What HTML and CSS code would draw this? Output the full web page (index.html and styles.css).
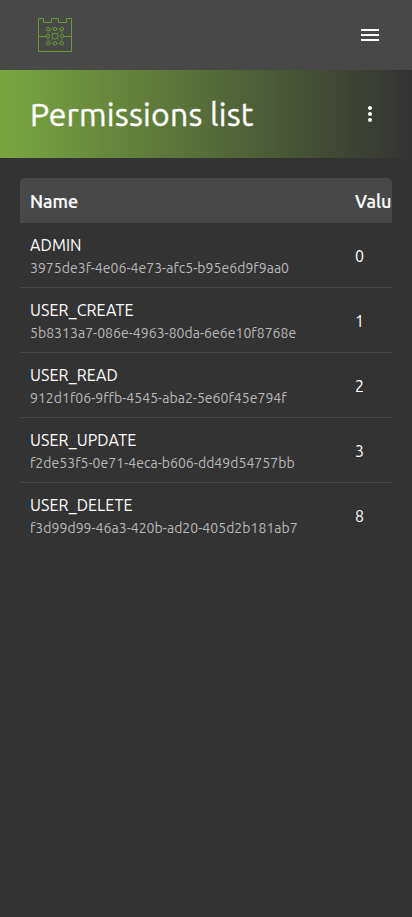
FILE: index.html
```html
<!DOCTYPE html>
<html lang="en">
<head>
<meta charset="utf-8">
<meta name="viewport" content="width=device-width, initial-scale=1">
<title>Permissions list</title>
<link rel="stylesheet" href="styles.css">
</head>
<body>
<header class="topbar">
  <svg class="logo" viewBox="0 0 34 34" fill="none" stroke="#679b31" stroke-width="1">
    <path d="M.5.5H5.5V4.5H13.5V.5H20.5V4.5H28.5V.5H33.5V33.5H.5ZM.5 18.500H8.500M25.500 18.500H33.500"/>
    <path d="M10 11V25.500M24 11V25.500M10 11H24M10 25.500H24M10 11L24 25.500M24 11L10 25.500" stroke-width=".8" opacity=".8"/>
    <g fill="#484848">
      <circle cx="10" cy="11" r="1.700"/><circle cx="17" cy="11" r="1.700"/><circle cx="24" cy="11" r="1.700"/>
      <circle cx="10" cy="18.200" r="1.700"/><circle cx="17" cy="18.200" r="3"/><circle cx="24" cy="18.200" r="1.700"/>
      <circle cx="10" cy="25.300" r="1.700"/><circle cx="17" cy="25.300" r="1.700"/><circle cx="24" cy="25.300" r="1.700"/>
    </g>
  </svg>
  <svg class="icon" viewBox="0 0 24 24" fill="#fff"><path d="M3 18h18v-2H3v2zm0-5h18v-2H3v2zm0-7v2h18V6H3z"/></svg>
</header>
<section class="titlebar">
  <h1 class="title">Permissions list</h1>
  <svg class="icon" viewBox="0 0 24 24" fill="#fff"><path d="M12 8c1.100 0 2-.9 2-2s-.9-2-2-2-2 .9-2 2 .9 2 2 2zm0 2c-1.100 0-2 .9-2 2s.9 2 2 2 2-.9 2-2-.9-2-2-2zm0 6c-1.100 0-2 .9-2 2s.9 2 2 2 2-.9 2-2-.9-2-2-2z"/></svg>
</section>
<main class="table">
  <div class="row head"><div class="name-head">Name</div><div class="value-head">Value</div></div>
  <div class="row"><div><div class="name">ADMIN</div><div class="id">3975de3f-4e06-4e73-afc5-b95e6d9f9aa0</div></div><div class="value">0</div></div>
  <div class="row"><div><div class="name">USER_CREATE</div><div class="id">5b8313a7-086e-4963-80da-6e6e10f8768e</div></div><div class="value">1</div></div>
  <div class="row"><div><div class="name">USER_READ</div><div class="id">912d1f06-9ffb-4545-aba2-5e60f45e794f</div></div><div class="value">2</div></div>
  <div class="row"><div><div class="name">USER_UPDATE</div><div class="id">f2de53f5-0e71-4eca-b606-dd49d54757bb</div></div><div class="value">3</div></div>
  <div class="row"><div><div class="name">USER_DELETE</div><div class="id">f3d99d99-46a3-420b-ad20-405d2b181ab7</div></div><div class="value">8</div></div>
</main>
</body>
</html>
```
FILE: styles.css
```css
* { box-sizing: border-box; }
body {
  margin: 0;
  min-height: 100vh;
  background: #333;
  color: #fff;
  font-family: Ubuntu, "Noto Sans", sans-serif;
  font-size: 16px;
}
.topbar {
  display: flex;
  align-items: center;
  justify-content: space-between;
  height: 70px;
  padding: 0 30px 0 38px;
  background: #484848;
}
.logo { width: 34px; height: 34px; }
.icon { width: 24px; height: 24px; }
.titlebar {
  display: flex;
  align-items: center;
  justify-content: space-between;
  height: 88px;
  padding: 0 30px;
  background: linear-gradient(to right, #7aa640, #333);
}
.title {
  margin: 0;
  font-size: 32px;
  font-weight: 400;
  letter-spacing: .22px;
  line-height: 40px;
  white-space: nowrap;
  -webkit-text-stroke: .35px #fff;
}
.table {
  margin: 20px;
  overflow: hidden;
  border-radius: 5px 5px 0 0;
}
.row {
  display: grid;
  grid-template-columns: 325px 60px;
  align-items: center;
  height: 65px;
  padding-left: 10px;
  border-bottom: 1px solid #484848;
}
.row:last-child { border-bottom-color: transparent; }
.head {
  height: 45px;
  padding-top: 2px;
  background: #484848;
  font-size: 18px;
  font-weight: 500;
  -webkit-text-stroke: .2px #fff;
}
.name {
  padding-top: 1px;
  letter-spacing: .1px;
  line-height: 24px;
}
.id {
  padding-top: 1px;
  margin-bottom: -1px;
  color: #b9b9b9;
  font-size: 14px;
  letter-spacing: .04px;
  line-height: 21px;
}
.value { padding-top: 2px; }
```
